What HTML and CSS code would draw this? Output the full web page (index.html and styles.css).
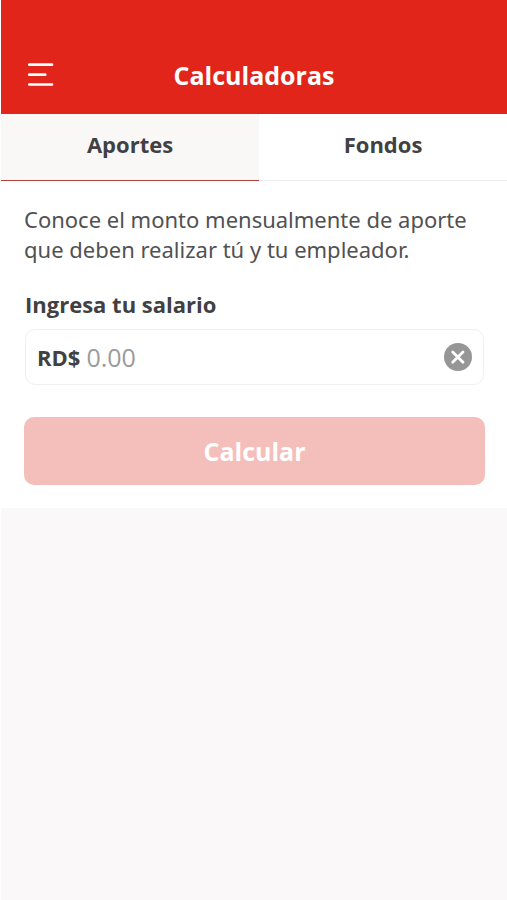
FILE: index.html
```html
<!DOCTYPE html>
<html lang="es">
<head>
<meta charset="utf-8">
<meta name="viewport" content="width=device-width, initial-scale=1">
<title>Calculadoras</title>
<link rel="stylesheet" href="styles.css">
</head>
<body>
<header class="header">
  <button class="menu" type="button" aria-label="Menú">
    <svg width="28" height="26" viewBox="0 0 28 26" fill="none" stroke="currentColor" stroke-width="2.7" stroke-linecap="round"><path d="M2.3 2.7H25M2.3 12.7H18.2M2.3 22.5H25"/></svg>
  </button>
  <h1 class="title">Calculadoras</h1>
</header>
<nav class="tabs">
  <a class="tab active" href="#aportes">Aportes</a>
  <a class="tab" href="#fondos">Fondos</a>
</nav>
<main class="panel">
  <p class="intro">Conoce el monto mensualmente de aporte que deben realizar tú y tu empleador.</p>
  <form class="form">
    <label class="label" for="salary">Ingresa tu salario</label>
    <div class="field">
      <span class="prefix">RD$</span>
      <input class="input" id="salary" type="text" inputmode="decimal" placeholder="0.00">
      <button class="clear" type="button" aria-label="Borrar">
        <svg width="28" height="28" viewBox="0 0 28 28"><circle cx="14" cy="14" r="14" fill="#969696"/><path d="M8.7 9L19 19.3M19 9L8.7 19.3" stroke="#fff" stroke-width="2.8" stroke-linecap="round"/></svg>
      </button>
    </div>
    <button class="submit" type="submit">Calcular</button>
  </form>
</main>
</body>
</html>
```
FILE: styles.css
```css
* {
  box-sizing: border-box;
}

body {
  margin: 0;
  min-height: 100vh;
  border-left: 1px solid #fff;
  background: #faf8f9;
  color: #414042;
  font-family: "Open Sans", sans-serif;
}

button {
  border: 0;
  padding: 0;
  background: none;
  color: inherit;
  font: inherit;
}

svg {
  display: block;
}

.header {
  display: grid;
  grid-template-columns: 28px 1fr 28px;
  align-items: center;
  padding: 56px 26px 20px;
  background: #e1251b;
  color: #fff;
}

.title {
  margin: 0;
  font-size: 25px;
  line-height: 38px;
  font-weight: 700;
  text-align: center;
}

.tabs {
  display: grid;
  grid-template-columns: 51fr 49fr;
  background: #fff;
}

.tab {
  padding: 15px 0 21px;
  border-bottom: 1px solid #eeecec;
  color: inherit;
  font-size: 22px;
  line-height: 30px;
  font-weight: 700;
  text-align: center;
  text-decoration: none;
}

.active {
  background: #faf8f7;
  border-bottom-color: #b8413f;
}

.panel {
  padding: 23px 22px 23px 23px;
  background: #fff;
}

.intro {
  margin: 0;
  color: #515153;
  font-family: "Noto Sans", "Open Sans", sans-serif;
  font-size: 22px;
  line-height: 30px;
}

.form {
  display: flex;
  flex-direction: column;
}

.label {
  margin: 25px 1px 0;
  font-size: 22px;
  line-height: 30px;
  font-weight: 700;
}

.field {
  display: flex;
  align-items: center;
  gap: 6px;
  height: 56px;
  margin: 10px 1px 0;
  padding: 0 11px;
  border: 1px solid #f0f0f0;
  border-radius: 10px;
}

.prefix {
  font-size: 22px;
  font-weight: 700;
}

.input {
  flex: 1;
  min-width: 0;
  padding: 0;
  border: 0;
  outline: 0;
  background: none;
  color: inherit;
  font: 25px "Open Sans", sans-serif;
}

.input::placeholder {
  color: #9b9b9b;
}

.submit {
  height: 68px;
  margin-top: 32px;
  border-radius: 10px;
  background: #f4bfba;
  color: #fff;
  font-size: 25px;
  font-weight: 700;
}
```
